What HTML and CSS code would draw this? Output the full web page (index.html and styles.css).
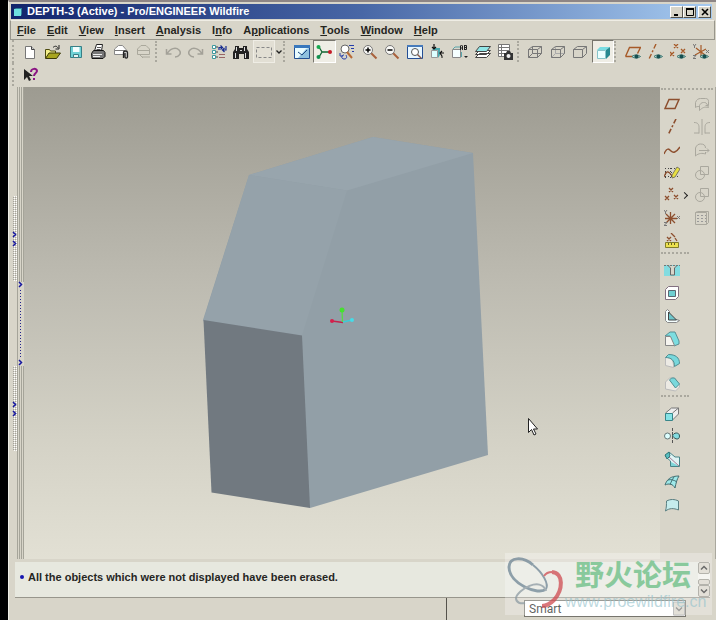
FILE: index.html
```html
<!DOCTYPE html>
<html lang="en">
<head>
<meta charset="utf-8">
<title>DEPTH-3 (Active) - Pro/ENGINEER Wildfire</title>
<link rel="stylesheet" href="styles.css">
</head>
<body>
<div class="window">
  <header class="titlebar">
    <svg class="app-icon" viewBox="0 0 10 10"><path fill="#2d7f9a" d="M1 2l2-1h6v6l-1 2H1z"/><path fill="#6fe0e0" d="M1 2h7v7H1z"/></svg>
    <h1>DEPTH-3 (Active) - Pro/ENGINEER Wildfire</h1>
    <div class="caption">
      <button aria-label="Minimize"><svg viewBox="0 0 8 8"><path fill="#000" d="M1 6h4v2H1z"/></svg></button>
      <button aria-label="Maximize"><svg viewBox="0 0 8 8"><path fill="none" stroke="#000" d="M.5 1v6.500h7V1M0 1h8"/><path fill="#000" d="M0 0h8v2H0z"/></svg></button>
      <button class="close" aria-label="Close"><svg viewBox="0 0 8 8"><path stroke="#000" stroke-width="1.600" d="M1 1l6 6M7 1L1 7"/></svg></button>
    </div>
  </header>

  <nav class="menubar">
    <button><u>F</u>ile</button><button><u>E</u>dit</button><button><u>V</u>iew</button><button><u>I</u>nsert</button><button><u>A</u>nalysis</button><button>I<u>n</u>fo</button><button>A<u>p</u>plications</button><button><u>T</u>ools</button><button><u>W</u>indow</button><button><u>H</u>elp</button>
  </nav>

  <div class="toolbars">
    <div class="toolbar">
      <button aria-label="New"><svg viewBox="0 0 16 16"><path fill="#fff" stroke="#777" d="M3.500 2.500h6l3 3v9h-9z"/><path fill="#ccc" stroke="#444" d="M9.500 2.500v3h3"/></svg></button>
      <button aria-label="Open"><svg viewBox="0 0 16 16"><path fill="#f4f08a" stroke="#4c4a10" d="M.5 14V5.500h4l1 1.500h5v2"/><path fill="#a8a520" stroke="#3a3808" d="M.5 14.500L4 9h11.500l-4 5.500z"/><path fill="none" stroke="#222" d="M8 3.500c2-2 4-1.500 5 .5M14 1v4h-3.500"/></svg></button>
      <button aria-label="Save"><svg viewBox="0 0 16 16"><path fill="#6fd2d6" stroke="#387f86" d="M2.500 2.500h11v11h-11z"/><path fill="#f4ffff" d="M5 3h6.500v5H5z"/><path fill="#e8f4f4" stroke="#387f86" d="M5.500 10.500h5v3h-5z"/></svg></button>
      <button aria-label="Print"><svg viewBox="0 0 16 16"><path fill="#fff" stroke="#222" d="M4.500 7l2-6.500h6L11.500 7"/><path stroke="#555" d="M7 3.500h4M6.500 5.500h4"/><path fill="#777" stroke="#111" d="M1.500 9.500l2-3h10l1.500 2v4l-2 2h-11z"/><path stroke="#eee" d="M3 10.500h9M3 12.500h7"/></svg></button>
      <button aria-label="Send with attachment"><svg viewBox="0 0 16 16"><path fill="#fff" stroke="#888" d="M1.500 10.500V5l4-3.500h4l3.500 4v5z"/><path stroke="#777" d="M2 6.500h10"/><path fill="#ccc" stroke="#222" stroke-width="1.300" d="M10.500 14V8.500c0-2 4-2 4 0V13c0 1.500-2.500 1.500-2.500 0V9"/></svg></button>
      <button aria-label="Send as link" disabled><svg viewBox="0 0 16 16"><g fill="none" stroke="#aaa89c"><path d="M1.500 10.500V5L5 1.500h5L13.500 5v5.500zM2 6.500h11M6 13h8M4 11l3 3"/></g></svg></button>
      <span class="divider"></span>
      <button aria-label="Undo" disabled><svg viewBox="0 0 16 16"><path fill="none" stroke="#a3a198" stroke-width="1.500" d="M1.500 5v5h5M2 10c3-6 9-7 12-4s0 7-4 7"/></svg></button>
      <button aria-label="Redo" disabled><svg viewBox="0 0 16 16"><path fill="none" stroke="#a3a198" stroke-width="1.500" d="M14.500 5v5h-5M14 10C11 4 5 3 2 6s0 7 4 7"/></svg></button>
      <button aria-label="Regenerate"><svg viewBox="0 0 16 16"><g fill="#fff" stroke="#3d999e"><path d="M1.500 1.500h3v3h-3zM1.500 6.500h3v3h-3zM1.500 11.500h3v3h-3z"/></g><path stroke="#444" d="M5 3h2M5 8h2M5 13h2"/><path fill="none" stroke="#172c8f" stroke-width="1.200" d="M8 6V3.500h3M9.500 1.500l2 2-2 2M15 2v4h-3M13.500 8l-2-2 2-2"/><path stroke="#966" d="M8 10.500h6M8 13.500h6"/></svg></button>
      <button aria-label="Find"><svg viewBox="0 0 16 16"><path fill="#222" d="M2 2h4v2h4V2h4v3l2 3v7h-5v-5H6v5H0V8l2-3z"/><path stroke="#ddd" d="M3.500 3v4M11.500 3v4M2.500 9v5M12.500 9v5M7 6.500h2"/></svg></button>
      <button class="framed" aria-label="Select box"><svg viewBox="0 0 16 16"><path fill="none" stroke="#888" stroke-dasharray="3 2" d="M.5 3.500h15v10H.5z"/></svg></button>
      <button class="caret" aria-label="Selection options"><svg viewBox="0 0 6 16"><path fill="none" stroke="#222" stroke-width="1.300" d="M.5 6.500L3 9l2.500-2.500"/></svg></button>
      <span class="divider"></span>
      <button aria-label="Repaint"><svg viewBox="0 0 16 16"><path fill="#e8fbff" stroke="#234f91" d="M.5 1.500h15v13H.5z"/><path fill="#3978bd" d="M0 1h16v3H0z"/><path fill="#8fc1df" d="M4 14l8-9 3-1v10z"/><path fill="none" stroke="#1c4680" d="M4 8l4 3 5-5"/></svg></button>
      <button class="pressed" aria-label="Spin center"><svg viewBox="0 0 16 16"><path fill="none" stroke="#163" stroke-width="1.300" d="M3 3l3 5-3 5M6 8h8"/><circle cx="2.500" cy="3" r="2" fill="#18a850"/><circle cx="2.500" cy="13" r="2" fill="#129050"/><circle cx="14" cy="8" r="2" fill="#c51c28"/></svg></button>
      <button aria-label="Orient mode"><svg viewBox="0 0 16 16"><circle cx="6" cy="5" r="4" fill="#fff" stroke="#666"/><path stroke="#b96b36" stroke-width="2" d="M8 8l5 6"/><path fill="none" stroke="#243cab" d="M10 1.500h5M12 4.500h3M13 7.500h2M1 9v3h3M5 11c-3 0-3 4 0 4s3-2 2-4"/></svg></button>
      <button aria-label="Zoom in"><svg viewBox="0 0 16 16"><path stroke="#a9613c" stroke-width="2" d="M9 9l5.500 5.500"/><circle cx="6" cy="6" r="4.500" fill="#f8f8f5" stroke="#777"/><path stroke="#000" stroke-width="1.500" d="M3.500 6h5M6 3.500v5"/></svg></button>
      <button aria-label="Zoom out"><svg viewBox="0 0 16 16"><path stroke="#a9613c" stroke-width="2" d="M9 9l5.500 5.500"/><circle cx="6" cy="6" r="4.500" fill="#f8f8f5" stroke="#777"/><path stroke="#000" stroke-width="1.500" d="M3.500 6h5"/></svg></button>
      <button aria-label="Refit"><svg viewBox="0 0 16 16"><path fill="#e9f7ff" stroke="#244e94" d="M.5 1.500h15v13H.5z"/><path fill="#477bbb" d="M0 1h16v2H0z"/><circle cx="8" cy="8" r="3.500" fill="#fff" stroke="#555"/><path stroke="#875a4b" stroke-width="1.500" d="M10.500 10.500l4 4"/></svg></button>
      <button aria-label="Reorient"><svg viewBox="0 0 16 16"><path fill="#dff" stroke="#999" d="M2.500 6.500h6v7h-6z"/><path fill="#4aa8ad" d="M9 6l2-2v7l-2 3zM3 6l2-2h6L9 6z"/><path fill="none" stroke="#111" stroke-width="1.200" d="M5 0v5M3 3l2 2 2-2M15 9h-4M13 7l-2 2 2 3M12 13h2"/></svg></button>
      <button aria-label="Saved views"><svg viewBox="0 0 16 16"><path fill="#f5ffff" stroke="#888" d="M.5 5.500h8v8h-8z"/><path fill="none" stroke="#5aa5ab" d="M1 5l2-2h5M9.500 8v5"/><path fill="none" stroke="#222" d="M8.500 6V2l1-1 1 1v4M8.500 4h2M12.500 1v5M12.500 1.500h2v4h-2M12.500 3.500h2"/><path fill="#222" d="M12 12h4l-2 2z"/></svg></button>
      <button aria-label="Layers"><svg viewBox="0 0 16 16"><g stroke="#444"><path fill="#fff" d="M.5 13.500l4-4h11l-4 4zM.5 10.500l4-4h11l-4 4z"/><path fill="#91e6e7" d="M.5 7.500l4-5h11l-4 5z"/></g></svg></button>
      <button aria-label="View manager"><svg viewBox="0 0 16 16"><path fill="#fff" stroke="#777" d="M1.500.5h11v12h-11z"/><path stroke="#777" d="M2 3.500h10M2 6.500h10M2 9.500h10M4.500 1v11"/><path fill="#333" d="M7 9h2l1-2h3l1 2h2v7H7z"/><circle cx="11.500" cy="12" r="2" fill="#eee"/></svg></button>
      <span class="divider"></span>
      <button aria-label="Wireframe"><svg viewBox="0 0 16 16"><path fill="none" stroke="#777" d="M1.500 5.500h9v8h-9zM5.500 2.500h9v7h-9zM1.500 5.500l4-3M10.500 5.500l4-3M10.500 13.500l4-4M1.500 13.500l4-4"/></svg></button>
      <button aria-label="Hidden line"><svg viewBox="0 0 16 16"><path fill="none" stroke="#aaa" d="M5.500 3v6.500h9M1.500 13.500l4-4"/><path fill="none" stroke="#777" d="M1.500 5.500h9v8h-9zM1.500 5.500l4-3h9v7l-4 4M10.500 5.500l4-3"/></svg></button>
      <button aria-label="No hidden"><svg viewBox="0 0 16 16"><path fill="none" stroke="#777" d="M1.500 5.500h9v8h-9zM1.500 5.500l4-3h9v7l-4 4M10.500 5.500l4-3"/></svg></button>
      <button class="pressed" aria-label="Shading"><svg viewBox="0 0 16 16"><path fill="#eaffff" stroke="#88c4ca" d="M2.500 6.500h8v8h-8z"/><path fill="#79dce2" d="M2 6l3-3h10l-4 3z"/><path fill="#268990" d="M11 6l4-3v8l-4 4z"/></svg></button>
      <span class="divider"></span>
      <button aria-label="Datum planes"><svg viewBox="0 0 16 16"><path fill="none" stroke="#a65a28" stroke-width="1.400" d="M.5 12.500l4-9h11l-3 6M.5 12.500h7"/><use href="#eye"/></svg></button>
      <button aria-label="Datum axes"><svg viewBox="0 0 16 16"><path stroke="#a65a28" stroke-width="1.400" stroke-dasharray="5 2 2 2" d="M9 0L2 15"/><use href="#eye"/></svg></button>
      <button aria-label="Datum points"><svg viewBox="0 0 16 16"><path stroke="#a65a28" stroke-width="1.300" d="M4 0l4 4M8 0L4 4M0 8l4 4M4 8l-4 4M11 5l4 4M15 5l-4 4"/><use href="#eye"/></svg></button>
      <button aria-label="Coordinate systems"><svg viewBox="0 0 16 16"><path stroke="#a65a28" stroke-width="1.200" d="M8 1v12M3 4l9 7M2 11l11-6"/><path fill="none" stroke="#777" d="M0 0l1.500 2L3 0M1.500 2v2M13 6l3 3M16 6l-3 3M0 11.500h3l-3 3h3"/><use href="#eye"/></svg></button>
    </div>
    <div class="toolbar help-row">
      <button aria-label="What is this"><svg viewBox="0 0 16 16"><path fill="#222" d="M1 2v11l3-3 2 4 2-1-2-4h4z"/><path fill="none" stroke="#8a1483" stroke-width="2" d="M8 5c0-4 6-4 6-1 0 2-3 2-3 5M11 11v2"/></svg></button>
    </div>
  </div>

  <main class="work">
    <svg class="gutter" viewBox="0 0 16 472" preserveAspectRatio="xMinYMin slice">
      <defs><pattern id="grip" width="2" height="2" patternUnits="userSpaceOnUse"><path fill="#a3a19a" d="M0 0h1v1H0z"/><path fill="#fff" d="M1 1h1v1H1z"/></pattern></defs>
      <path stroke="#a5a499" d="M8.500 0v472M10.500 0v472M12.500 0v472M14.500 0v472"/>
      <path fill="#d8d5c9" d="M10 195h5v84h-5z"/>
      <path fill="url(#grip)" d="M4 109h4v85H4zM4 279h4v85H4z"/>
      <path stroke="#23238c" stroke-dasharray="1 2" d="M11.500 203v68"/>
      <path fill="none" stroke="#1616a0" stroke-width="1.500" d="M4 145l2.500 2.500L4 150M4 154l2.500 2.500L4 159M4 315l2.500 2.500L4 320M4 324l2.500 2.500L4 329M10 195l2.500 2.500L10 200M10 273l2.500 2.500L10 278"/>
    </svg>
    <section class="viewport" aria-label="Model view">
      <svg viewBox="24 87 636 472">
        <path fill="#929fa7" d="M249 175L373 137l100 16 15 302-178 53-107-188z"/>
        <path fill="#98a5ad" d="M249 175l124-38 100 16-126 37.500z"/>
        <path fill="#95a2aa" d="M249 175l98 15.500L302 335.500 203.500 320z"/>
        <path fill="#717980" d="M203.500 320L302 335.500l8 172.500-98.500-15.500z"/>
        <path stroke="#c2244c" stroke-width="1.300" d="M332 321l11 1.500"/><path stroke="#55dd45" stroke-width="1.300" d="M342.500 322l-.5-12"/><path stroke="#3dccd8" stroke-width="1.300" d="M343 322l9-2"/>
        <circle cx="332" cy="321" r="2" fill="#d6204c"/><circle cx="342" cy="310" r="2.500" fill="#46e030"/><circle cx="352" cy="320" r="2" fill="#45dce8"/>
        <path fill="#fff" stroke="#222" d="M528.500 418.500v14l3-3 2.500 5.500 2-1-2.500-5h4z"/>
      </svg>
    </section>
    <aside class="palette">
      <div class="tools datum">
        <button aria-label="Plane"><svg viewBox="0 0 16 16"><path fill="none" stroke="#8d4f2e" stroke-width="1.500" d="M1 12.500l4-9h10l-4 9z"/></svg></button>
        <button disabled aria-label="Merge"><svg viewBox="0 0 16 16"><path fill="none" stroke="#aaa89e" d="M1.500 11.500V6.500c1-3 3-4 5-4h5c2 0 3 1 3 3v4h-3M5.500 14.500v-5c1-2 2-3 4-3h1c2 0 3 2 4 5-4-1-6 0-9 3M1.500 11.500c1-1 2-1 4-1"/></svg></button>
        <button aria-label="Axis"><svg viewBox="0 0 16 16"><path stroke="#8d4f2e" stroke-width="1.600" stroke-dasharray="5 2 2 2" d="M12 0L4 16"/></svg></button>
        <button disabled aria-label="Trim"><svg viewBox="0 0 16 16"><path fill="none" stroke="#aaa89e" d="M8 0v16M0 3.500c4 0 5 2 5 5v6M16 3.500c-4 0-5 2-5 5v6M0 14h5M11 14h5"/></svg></button>
        <button aria-label="Curve"><svg viewBox="0 0 16 16"><path fill="none" stroke="#8d4f2e" stroke-width="1.500" d="M0 12c3-7 5-5 7-3s5 2 9-4"/></svg></button>
        <button disabled aria-label="Extend"><svg viewBox="0 0 16 16"><path fill="none" stroke="#aaa89e" d="M1.500 14V6c1-3 3-4 5-4 3 0 5 1 5 4M1.500 14c3-3 7-3 10-2v-2M5 8.500h10M13 6.500l2 2-2 2"/></svg></button>
        <button aria-label="Sketch"><svg viewBox="0 0 16 16"><path fill="none" stroke="#444" stroke-dasharray="1 2" d="M1 3.500h14M1 7.500h14M1 11.500h14M1.500 3v11M6.500 3v11"/><path fill="none" stroke="#8d4f2e" stroke-width="1.300" d="M0 12c2-6 4-7 8-1"/><path fill="#e7df43" stroke="#555" stroke-width=".7" d="M8 10l5-8 3 2-5 8-3 1z"/></svg></button>
        <button disabled aria-label="Offset"><svg viewBox="0 0 16 16"><g fill="none" stroke="#aaa89e"><path d="M6.500 1.500h8v8h-8z"/><circle cx="6" cy="10" r="4.500"/></g></svg></button>
        <button class="flyout" aria-label="Point"><svg viewBox="0 0 16 16"><path stroke="#8d4f2e" stroke-width="1.300" d="M5 1l4 4M9 1L5 5M1 9l4 4M5 9l-4 4M10 8l4 4M14 8l-4 4"/></svg></button>
        <button disabled aria-label="Intersect"><svg viewBox="0 0 16 16"><g fill="none" stroke="#aaa89e"><path d="M6.500 1.500h8v8h-8z"/><circle cx="6" cy="10" r="4.500"/></g></svg></button>
        <button aria-label="Coordinate system"><svg viewBox="0 0 16 16"><path stroke="#8d4f2e" stroke-width="1.300" d="M6.500 2v12M1 8.500h12M2 4l9 9M11 4l-9 9"/><path fill="none" stroke="#777" d="M0 0l1.500 2L3 0M1.500 2v2M13 6l3 3M16 6l-3 3M0 12.500h3l-3 3h3"/></svg></button>
        <button disabled aria-label="Pattern"><svg viewBox="0 0 16 16"><path fill="none" stroke="#aaa89e" d="M1.500 2.500h11v12h-11zM1.500 2.500l2-1h11v11l-2 2"/><path stroke="#999" stroke-dasharray="2 2" d="M3 5.500h9M3 8.500h9M3 11.500h9"/></svg></button>
        <button aria-label="Analysis feature"><svg viewBox="0 0 16 16"><path stroke="#8d4f2e" stroke-width="1.300" d="M3 4l4 4M7 4L3 8M7 0l4 4M11 5l2 3"/><path fill="#ece14f" stroke="#827d2a" d="M1.500 9.500h13v5h-13z"/><path stroke="#665f20" d="M4.500 10v2M7.500 10v2M10.500 10v2"/></svg></button>
      </div>
      <span class="rule"></span>
      <div class="tools features">
        <button aria-label="Hole"><svg viewBox="0 0 16 16"><path fill="#83dce0" d="M0 3h16v11H0z"/><path fill="#d8d5c9" stroke="#666" d="M4.500 4l2 2v7h4V6l2-2"/><path stroke="#777" stroke-dasharray="2 1" d="M0 3.500h16"/></svg></button>
        <button aria-label="Shell"><svg viewBox="0 0 16 16"><path fill="#fff" stroke="#837080" d="M1.500 4.500l3-3h10v10l-3 3h-10z"/><path fill="#70cfd2" stroke="#5a6872" d="M4.500 5.500h7v6h-7z"/></svg></button>
        <button aria-label="Rib"><svg viewBox="0 0 16 16"><path fill="#f5ffff" stroke="#888" d="M1.500 3.500l2-2 2 2v8h7l3 1-3 2h-9l-2-2z"/><path fill="#6fc6ca" stroke="#444" d="M4.500 4l8 8h-8z"/></svg></button>
        <button aria-label="Draft"><svg viewBox="0 0 16 16"><path fill="#7cdde0" stroke="#598f94" d="M1 5l5-4h5l4 9v3l-5 2L6 5z"/><path fill="#f6f4ef" stroke="#888" d="M1.500 5.500h5l4 9h-9z"/></svg></button>
        <button aria-label="Round"><svg viewBox="0 0 16 16"><path fill="#eceae4" stroke="#bbb" d="M1.500 4.500c5 0 8 2 8 8v2l-8-2z"/><path fill="#78d8dc" stroke="#508f92" d="M1.500 4.500l3-3c7 0 11 3 11 9l-5 3c0-6-3-9-9-9z"/></svg></button>
        <button aria-label="Chamfer"><svg viewBox="0 0 16 16"><path fill="#eceae4" stroke="#bbb" d="M1.500 6l4-4h5l5 6v3l-4 4-10-2z"/><path fill="#78d8dc" stroke="#508f92" d="M5.500 4l2-2h3l5 6-4 4z"/></svg></button>
      </div>
      <span class="rule"></span>
      <div class="tools shapes">
        <button aria-label="Extrude"><svg viewBox="0 0 16 16"><path fill="#eee" stroke="#777" d="M1.500 7l6-5h7v6l-6 6z"/><path fill="none" stroke="#777" d="M8.500 7l6-5"/><path fill="#86e3e6" stroke="#38868a" d="M1.500 7.500h7v7h-7z"/></svg></button>
        <button aria-label="Revolve"><svg viewBox="0 0 16 16"><path stroke="#555" stroke-dasharray="3 1" d="M8.500 0v16"/><circle cx="3.500" cy="8" r="3" fill="#dff" stroke="#677"/><path fill="#83dce0" stroke="#355" d="M8.500 8c1-4 7-4 7 0s-4 4-7 0z"/></svg></button>
        <button aria-label="Sweep"><svg viewBox="0 0 16 16"><path fill="#dff4f4" stroke="#488488" d="M5 1l6 5h4.500v9.500H6.500V10L1 5z"/><path fill="#7fd5d8" d="M7 11l8 4H7z"/><path fill="#58bfc2" stroke="#377" d="M1 4l4-3 1 4-3 3z"/><path stroke="#a77892" d="M5 6l10 9"/></svg></button>
        <button aria-label="Boundary blend"><svg viewBox="0 0 16 16"><path fill="#9ee9ea" stroke="#446f72" d="M1 11C3 5 7 2 15 2c-2 3-3 7-4 12-2-4-6-5-10-3z"/><path fill="none" stroke="#446f72" d="M4 6c3-1 6 0 9 2M10 3C8 6 7 8 6 11"/></svg></button>
        <button aria-label="Style"><svg viewBox="0 0 16 16"><path fill="#c5eced" stroke="#597f82" d="M2.500 4c4-2 8-2 12 0v9c-5-2-9-2-13 1 1-4 1-6 1-10z"/></svg></button>
      </div>
    </aside>
  </main>

  <section class="messages">
    <p>All the objects which were not displayed have been erased.</p>
    <div class="scroller">
      <button aria-label="Scroll up"><svg viewBox="0 0 8 8"><path fill="none" stroke="#333" stroke-width="1.500" d="M1 5.500l3-3 3 3"/></svg></button>
      <span class="thumb"></span>
      <button aria-label="Scroll down"><svg viewBox="0 0 8 8"><path fill="none" stroke="#333" stroke-width="1.500" d="M1 2.500l3 3 3-3"/></svg></button>
    </div>
  </section>

  <footer class="status">
    <div class="status-text"></div>
    <div class="filter">
      <select aria-label="Selection filter"><option>Smart</option></select>
      <svg viewBox="0 0 12 14"><path fill="#d8d5c9" stroke="#aaa" d="M.5.5h11v13H.5z"/><path fill="none" stroke="#777" stroke-width="1.300" d="M3 6l3 3 3-3"/></svg>
    </div>
  </footer>

  <div class="watermark">
    <svg viewBox="0 0 60 58">
      <g fill="none">
        <path stroke="#6e8595" stroke-width="3" d="M41 35C34 42 4 30 4 13 4 3 18 2 28 11"/>
        <path stroke="#6e8595" stroke-width="2" d="M28 11c10 8 16 19 13 24"/>
        <path stroke="#8d9ba3" stroke-width="2" d="M41 37C36 22 12 36 11 44c0 5 5 6 9 5"/>
        <path stroke="#cf4a50" stroke-width="2" d="M39 22c2-3 5-4 8-4"/>
        <path stroke="#cf4a50" stroke-width="4" d="M47 18c12 1 11 18 2 28-4 4-8 6-12 6"/>
      </g>
    </svg>
    <div class="brand"><strong lang="zh">野火论坛</strong><span>www.proewildfire.cn</span></div>
  </div>
</div>
<svg class="symbols" aria-hidden="true"><symbol id="eye" viewBox="0 0 16 16"><path fill="#b8d8d2" stroke="#34716c" d="M7 12.500c2-2 6-2 8.500 0-2.500 2-6.500 2-8.500 0z"/><circle cx="11.500" cy="12.500" r="2" fill="#164f50"/></symbol></svg>
</body>
</html>
```
FILE: styles.css
```css
* { box-sizing: border-box; }

body {
  margin: 0;
  padding-left: 8px;
  background: #000;
  color: #26261f;
  font-family: "Liberation Sans", Arial, sans-serif;
  font-size: 11px;
}

button {
  display: flex;
  align-items: center;
  justify-content: center;
  margin: 0;
  padding: 0;
  border: 0;
  background: none;
  color: inherit;
  font: inherit;
}

svg { display: block; }
.symbols { position: absolute; width: 0; height: 0; }

.window {
  position: relative;
  display: flex;
  flex-direction: column;
  min-height: 100vh;
  border-top: 2px solid #8d8585;
  border-left: 1px solid #f0eee6;
  background: #d8d5c9;
}

/* Title bar */
.titlebar {
  display: flex;
  align-items: center;
  height: 15px;
  margin: 2px 4px 1px 2px;
  padding: 0 1px 0 2px;
  background: linear-gradient(90deg, #12246c, #4867a6 50%, #a6caf0);
  color: #fff;
}
.app-icon { width: 10px; height: 10px; margin-right: 4px; }
.titlebar h1 { flex: 1; margin: 0; font-size: 11px; line-height: 15px; }
.caption { display: flex; }
.caption button {
  width: 13px;
  height: 12px;
  border: 1px solid #55534c;
  border-top-color: #fff;
  border-left-color: #fff;
  background: #d8d5c9;
}
.caption .close { margin-left: 2px; }
.caption svg { width: 8px; height: 8px; }

/* Menus */
.menubar {
  display: flex;
  gap: 11px;
  height: 20px;
  margin: 0 1px;
  padding-left: 6px;
  border: 1px solid #98968c;
  border-top-color: #efede5;
  font-weight: bold;
}

/* Toolbars */
.toolbars { padding: 0 4px 1px 3px; }
.toolbar {
  display: flex;
  height: 23px;
  padding-left: 5px;
  border-left: 2px dotted #aaa89e;
}
.toolbar button { flex: 1 1 20px; }
.toolbar svg { flex: none; width: 16px; height: 16px; }
.toolbar .caret { flex: 0 0 8px; }
.toolbar .caret svg { width: 6px; }
.divider { flex: 0 0 7px; margin: 1px 0; border-left: 2px dotted #aaa89e; }
.toolbar .pressed {
  border: 1px solid #fff;
  border-top-color: #77756d;
  border-left-color: #77756d;
  background: #efede5;
}
.toolbar .framed { border: 1px solid #efede5; background: #e2dfd4; }
.toolbar.help-row button { flex: 0 0 23px; }

/* Work area */
.work { display: flex; flex: 1; min-height: 472px; }
.gutter { flex: none; width: 15px; height: auto; }
.viewport {
  display: flex;
  flex: 1;
  min-width: 0;
  background: linear-gradient(#9d9b91, #bcbab0 40%, #d4d2c6 75%, #e2e0d4);
}
.viewport svg { flex: 1; width: 100%; height: 472px; }
.palette {
  display: flex;
  flex-direction: column;
  width: 56px;
  padding: 1px 2px 43px 1px;
  border-right: 1px solid #aaa89e;
}
.tools { display: grid; grid-template-columns: 22px; grid-auto-rows: 1fr; }
.datum {
  flex: 7;
  grid-template-columns: 22px 22px;
  column-gap: 8px;
  padding-top: 3px;
  border-top: 2px dotted #aaa89e;
}
.features { flex: 6; }
.shapes { flex: 5; }
.tools svg { width: 16px; height: 16px; }
.flyout { position: relative; }
.flyout::after {
  content: "";
  position: absolute;
  right: -4px;
  width: 4px;
  height: 4px;
  border: solid #222;
  border-width: 1px 1px 0 0;
  transform: rotate(45deg);
}
.rule { width: 28px; height: 7px; border-top: 2px dotted #aaa89e; }

/* Messages */
.messages {
  display: flex;
  justify-content: space-between;
  height: 36px;
  margin: 3px 6px 0;
  border-bottom: 1px solid #98968c;
  background: #e7e8df;
}
.messages p {
  display: flex;
  align-items: center;
  gap: 4px;
  height: 30px;
  margin: 0 0 0 5px;
  font-weight: bold;
}
.messages p::before {
  content: "";
  width: 4px;
  height: 4px;
  border-radius: 50%;
  background: #1616b0;
}
.scroller {
  display: flex;
  flex-direction: column;
  width: 12px;
  background: #f2f1ec;
}
.scroller button, .thumb {
  height: 12px;
  border: 1px solid #98968c;
  border-radius: 2px;
  background: #d8d5c9;
}
.scroller svg { width: 8px; height: 8px; }
.thumb { height: 6px; margin-top: auto; }

/* Status */
.status { display: flex; height: 22px; padding-right: 30px; }
.status-text { flex: 1; border-right: 1px solid #55534c; margin-right: 77px; }
.filter { position: relative; width: 162px; height: 17px; margin-top: 2px; }
.filter select {
  display: block;
  appearance: none;
  width: 100%;
  height: 17px;
  padding: 0 4px;
  border: 1px solid #77756d;
  border-radius: 0;
  background: #fff;
  color: #26261f;
  font: 12px/14px Roboto, sans-serif;
}
.filter svg { position: absolute; top: 1px; right: 1px; width: 12px; height: 15px; }

/* Forum stamp over the lower right corner */
.watermark {
  position: absolute;
  right: 4px;
  bottom: 5px;
  display: flex;
  width: 207px;
  height: 62px;
  background: rgb(255 255 255 / 28%);
  pointer-events: none;
}
.watermark svg { flex: none; width: 60px; height: 58px; margin-top: 1px; opacity: .75; }
.brand { display: flex; flex-direction: column; white-space: nowrap; }
.brand strong {
  margin-left: 10px;
  color: #89c99c;
  font: bold 29px/40px "Noto Sans CJK SC", sans-serif;
}
.brand span { color: rgb(150 195 205 / 65%); font-size: 16px; line-height: 18px; }
```
